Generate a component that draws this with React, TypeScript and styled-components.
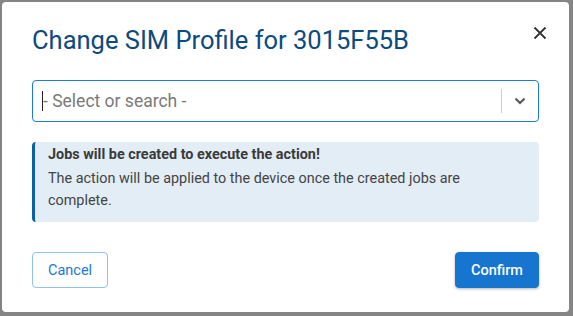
import React from 'react';
import styled, { createGlobalStyle } from 'styled-components';

const GlobalStyle = createGlobalStyle`
  html, body {
    margin: 0;
    padding: 0;
    background: #858585;
    font-family: Roboto, "Liberation Sans", sans-serif;
  }
`;

const Backdrop = styled.div`
  width: 573px;
  height: 316px;
  padding: 2px 4px 4px 2px;
  box-sizing: border-box;
`;

const Dialog = styled.div`
  width: 567px;
  height: 310px;
  background: #fff;
  border-radius: 4px;
  box-sizing: border-box;
  padding: 22px 30px 0 30px;
  display: flex;
  flex-direction: column;
`;

const Header = styled.div`
  display: flex;
  align-items: flex-start;
  justify-content: space-between;
`;

const Title = styled.h2`
  margin: 0;
  font-size: 25.5px;
  line-height: 32px;
  font-weight: 400;
  color: #0c4a80;
`;

const CloseButton = styled.button`
  border: none;
  background: none;
  padding: 0;
  margin: -2px -12px 0 0;
  width: 22px;
  height: 22px;
  display: flex;
  align-items: center;
  justify-content: center;
  cursor: pointer;
  color: #333;
`;

const SelectBox = styled.div`
  margin-top: 24px;
  height: 42px;
  border: 1px solid #1a7ae6;
  border-radius: 4px;
  box-sizing: border-box;
  display: flex;
  align-items: center;
`;

const SelectInput = styled.div`
  flex: 1;
  padding-left: 9px;
  display: flex;
  align-items: center;
  font-size: 17.5px;
  color: #7a7a7a;
`;

const Caret = styled.span`
  width: 1px;
  height: 20px;
  background: #222;
`;

const Divider = styled.span`
  width: 1px;
  height: 24px;
  background: #cccccc;
`;

const ChevronWrap = styled.div`
  width: 36px;
  display: flex;
  align-items: center;
  justify-content: center;
  color: #555;
`;

const Alert = styled.div`
  margin-top: 20px;
  background: #e3edf6;
  border-left: 3px solid #0b5fa8;
  border-radius: 4px;
  padding: 3px 14px 10px 13px;
  color: #444;
  font-size: 14.4px;
  line-height: 22px;
`;

const AlertTitle = styled.div`
  font-weight: 700;
  line-height: 20px;
  color: #3a3a3a;
  margin-bottom: 3px;
`;

const Footer = styled.div`
  margin-top: 30px;
  display: flex;
  justify-content: space-between;
`;

const Button = styled.button<{ primary?: boolean }>`
  height: 36px;
  padding: 0 15px;
  font-family: Roboto, "Liberation Sans", sans-serif;
  font-size: 14.5px;
  font-weight: ${(p) => (p.primary ? 500 : 400)};
  border-radius: 4px;
  cursor: pointer;
  border: 1px solid ${(p) => (p.primary ? '#1575cf' : '#91c1ee')};
  background: ${(p) => (p.primary ? '#1575cf' : '#fff')};
  color: ${(p) => (p.primary ? '#fff' : '#1e78d0')};
  box-shadow: ${(p) => (p.primary ? '0 1px 3px rgba(0,0,0,0.3)' : 'none')};
`;

export default function App() {
  return (
    <>
      <GlobalStyle />
      <Backdrop>
        <Dialog>
          <Header>
            <Title>Change SIM Profile for 3015F55B</Title>
            <CloseButton aria-label="Close">
              <svg width="14" height="14" viewBox="0 0 14 14">
                <path d="M1.5 1.5 L12.5 12.5 M12.5 1.5 L1.5 12.5" stroke="currentColor" strokeWidth="1.8" />
              </svg>
            </CloseButton>
          </Header>
          <SelectBox>
            <SelectInput>
              <Caret />
              - Select or search -
            </SelectInput>
            <Divider />
            <ChevronWrap>
              <svg width="12" height="8" viewBox="0 0 12 8">
                <path d="M1.5 1.5 L6 6 L10.5 1.5" fill="none" stroke="currentColor" strokeWidth="2" />
              </svg>
            </ChevronWrap>
          </SelectBox>
          <Alert>
            <AlertTitle>Jobs will be created to execute the action!</AlertTitle>
            The action will be applied to the device once the created jobs are complete.
          </Alert>
          <Footer>
            <Button>Cancel</Button>
            <Button primary>Confirm</Button>
          </Footer>
        </Dialog>
      </Backdrop>
    </>
  );
}
